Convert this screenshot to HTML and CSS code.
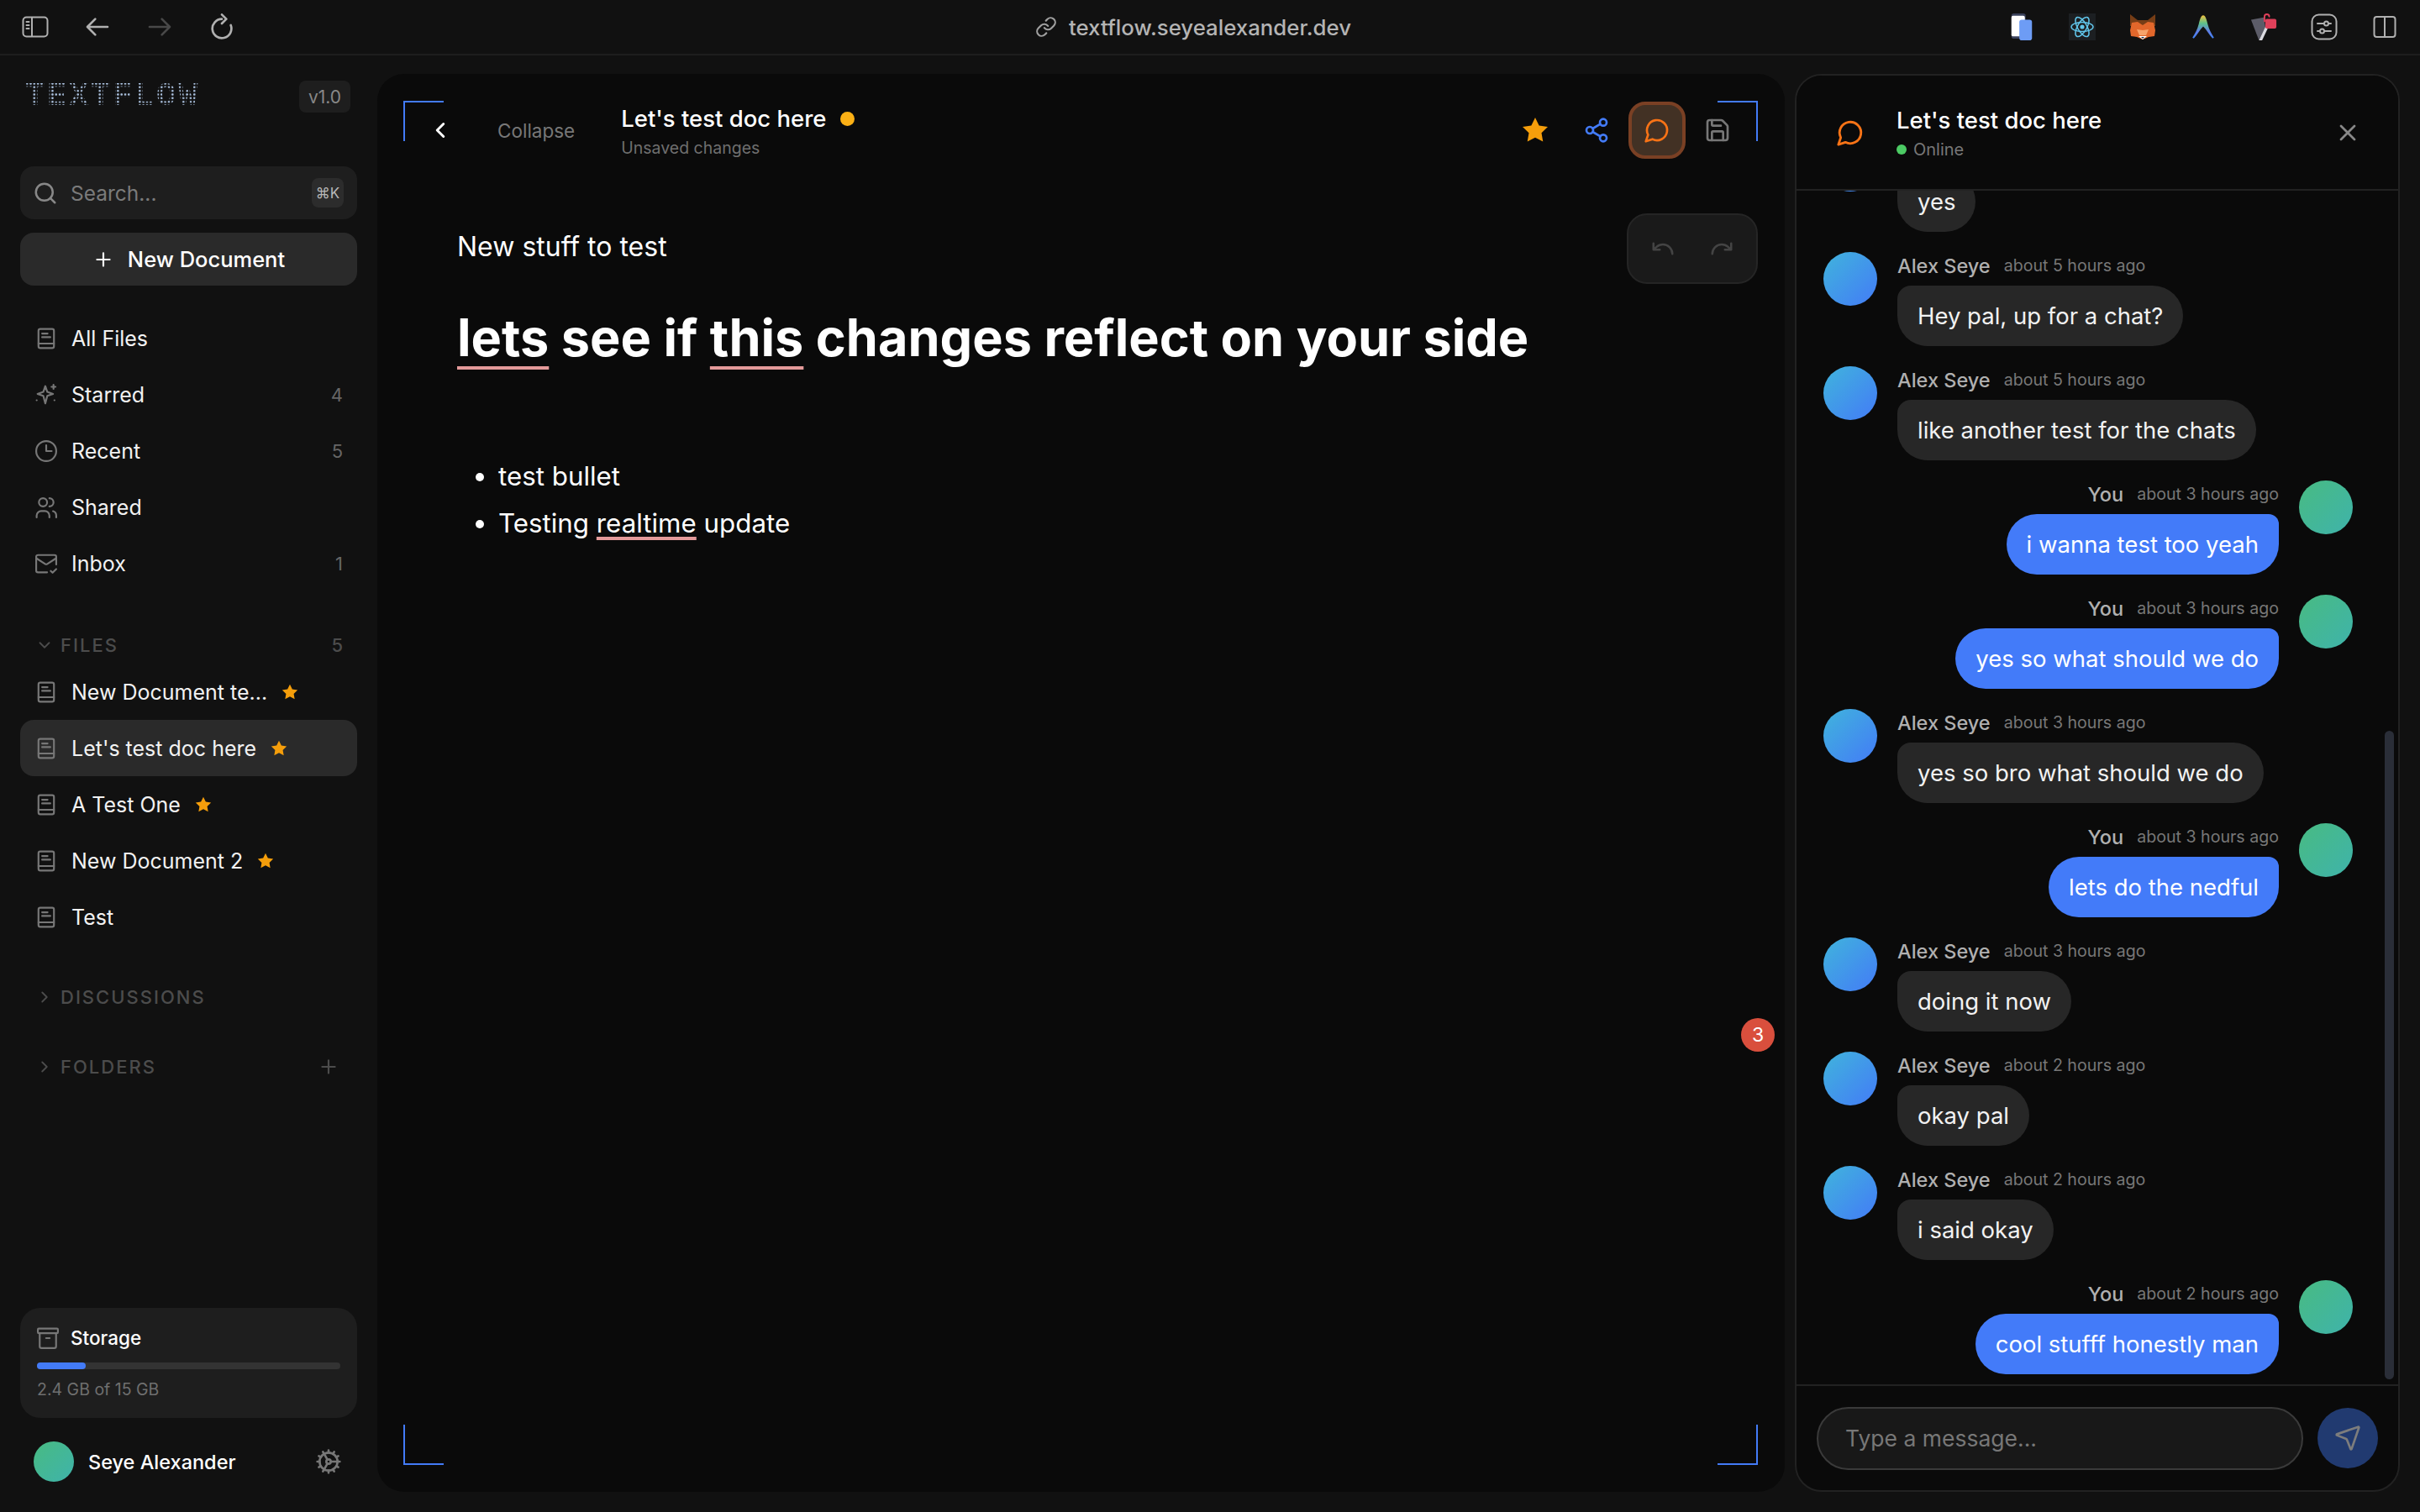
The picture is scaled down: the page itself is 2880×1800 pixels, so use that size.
FILE: index.html
```html
<!DOCTYPE html>
<html>
    <head>
        <meta name="viewport" content="width=device-width, initial-scale=1.0">
        <link rel="stylesheet" href="styles.css">
    </head>
    <body>
        <svg class="defs" width="0" height="0">
            <symbol id="doc" viewBox="0 0 24 24"><rect x="3.500" y="1.500" width="17" height="21" rx="2"/><path d="M3.500 17.500h17M7.500 6.500h6M7.500 10.500h9"/></symbol>
            <symbol id="star" viewBox="0 0 24 24"><path class="solid" d="M12 2l3.090 6.260L22 9.270l-5 4.870 1.180 6.880L12 17.770l-6.180 3.250L7 14.140 2 9.270l6.910-1.010z"/></symbol>
            <symbol id="chat" viewBox="0 0 24 24"><path d="M7.900 20A9 9 0 1 0 4 16.100L2 22Z"/></symbol>
            <symbol id="right" viewBox="0 0 24 24"><path d="M9 18l6-6-6-6"/></symbol>
            <symbol id="down" viewBox="0 0 24 24"><path d="M6 9l6 6 6-6"/></symbol>
        </svg>

        <header class="topbar">
            <div class="tb-left">
                <span class="tb-cell"><svg class="ic-32" viewBox="0 0 32 26"><rect x="1.500" y="1.500" width="29" height="23" rx="4"/><path d="M12 2v22M5.500 7h3M5.500 11h3M5.500 15h3"/></svg></span>
                <span class="tb-cell"><svg class="ic-32" viewBox="0 0 24 24"><path d="M21 12H3M10 5l-7 7 7 7"/></svg></span>
                <span class="tb-cell dim"><svg class="ic-32" viewBox="0 0 24 24"><path d="M3 12h18M14 5l7 7-7 7"/></svg></span>
                <span class="tb-cell"><svg class="ic-32" viewBox="0 0 24 24"><path d="M12 5a8.500 8.500 0 1 0 8 5.500M12 1l4 4-4 4"/></svg></span>
            </div>
            <div class="address">
                <svg class="ic-26" viewBox="0 0 24 24"><path d="M10 13a5 5 0 0 0 7.540.54l3-3a5 5 0 0 0-7.070-7.070l-1.720 1.710"/><path d="M14 11a5 5 0 0 0-7.540-.54l-3 3a5 5 0 0 0 7.070 7.070l1.710-1.710"/></svg>
                <span>textflow.seyealexander.dev</span>
            </div>
            <div class="tb-right">
                <span class="tb-cell">
                    <svg class="ext" viewBox="0 0 28 34"><rect x="1" y="0" width="18" height="32" rx="3" fill="#39405a"/><rect x="1" y="3" width="17" height="26" rx="2" fill="#fff"/><rect x="11" y="8" width="16" height="26" rx="3" fill="#6d9cf5"/></svg>
                </span>
                <span class="tb-cell">
                    <svg class="ext" viewBox="0 0 32 32"><rect width="32" height="32" fill="#1c1f22"/><g class="react"><ellipse cx="16" cy="16" rx="13" ry="5.500"/><ellipse cx="16" cy="16" rx="13" ry="5.500" transform="rotate(60 16 16)"/><ellipse cx="16" cy="16" rx="13" ry="5.500" transform="rotate(120 16 16)"/></g><circle cx="16" cy="16" r="2.600" fill="#61c5ea"/></svg>
                </span>
                <span class="tb-cell">
                    <svg class="ext" viewBox="0 0 32 32"><path fill="#763d16" d="M1 1l9 7h12l9-7 0 14-30 0z"/><path fill="#e2672b" d="M3 11l7-1 6 4 6-4 7 1 2 9-1 7-7 1-7 3-7-3-7-1-1-7z"/><path fill="#f6a36b" d="M9 19l7 1 7-1-3 7h-8z"/><path fill="#fff" d="M11 27h10l-5 4z"/><path fill="#233447" d="M14 28h4l-2 2z"/></svg>
                </span>
                <span class="tb-cell">
                    <svg class="ext" viewBox="0 0 28 30"><defs><linearGradient id="arc" x1="0" y1="0" x2="0" y2="1"><stop offset="0" stop-color="#f3c13c"/><stop offset=".35" stop-color="#5cc08a"/><stop offset=".7" stop-color="#5f7ee8"/><stop offset="1" stop-color="#3f83f5"/></linearGradient></defs><path d="M14 2c2.500 0 3.500 4 5 10 1.500 6 4 10 7 15l-1.500 1c-4-4-6.500-10-10.500-13.500C10 18 7.500 24 3.500 28L2 27c3-5 5.500-9 7-15 1.500-6 2.500-10 5-10z" fill="url(#arc)"/></svg>
                </span>
                <span class="tb-cell">
                    <svg class="ext" viewBox="0 0 34 34"><path fill="#5c5c68" d="M1 8l16-3 2 12-8 17z"/><path fill="#dcdce2" d="M11 34l8-17h4l-8 17z"/><path fill="none" stroke="#e0405a" stroke-width="2" d="M18 10V4a3 3 0 0 1 6 0"/><rect x="19" y="7" width="14" height="12" rx="2" fill="#e0405a"/></svg>
                </span>
                <span class="tb-cell">
                    <svg class="ic-32" viewBox="0 0 32 32"><rect x="1.500" y="1.500" width="29" height="29" rx="8"/><path d="M8 12h8M21 12h3M8 21h3M16 21h8"/><circle cx="18.500" cy="12" r="2.500"/><circle cx="13.500" cy="21" r="2.500"/></svg>
                </span>
                <span class="tb-cell">
                    <svg class="ic-28" viewBox="0 0 28 28"><rect x="1.500" y="2" width="25" height="24" rx="3"/><path d="M14 2v24"/></svg>
                </span>
            </div>
        </header>

        <div class="app">
            <aside class="sidebar">
                <div class="brand">
                    <span class="logo">TEXTFLOW</span>
                    <span class="version">v1.0</span>
                </div>
                <div class="search">
                    <svg class="ic-30" viewBox="0 0 24 24"><circle cx="11" cy="11" r="8"/><path d="M21 21l-4.300-4.300"/></svg>
                    <span class="search-text">Search...</span>
                    <span class="kbd">⌘K</span>
                </div>
                <div class="new-doc">
                    <svg class="ic-26" viewBox="0 0 24 24"><path d="M5 12h14M12 5v14"/></svg>
                    <span>New Document</span>
                </div>

                <nav class="nav">
                    <a class="row"><svg class="ic-26"><use href="#doc"/></svg><span>All Files</span></a>
                    <a class="row"><svg class="ic-26" viewBox="0 0 24 24"><path d="M11 2.500l2.200 6.300 6.300 2.200-6.300 2.200-2.200 8.300-2.200-8.300L2.500 11l6.300-2.200z"/><path d="M20 1v4.500M17.800 3.200h4.400M1.500 18h.1M21 18h.1"/></svg><span>Starred</span><em>4</em></a>
                    <a class="row"><svg class="ic-26" viewBox="0 0 24 24"><circle cx="12" cy="12" r="11"/><path d="M12 5.500V12h6"/></svg><span>Recent</span><em>5</em></a>
                    <a class="row"><svg class="ic-26" viewBox="0 0 24 24"><path d="M15.500 23v-2a5 5 0 0 0-5-5h-4a5 5 0 0 0-5 5v2"/><circle cx="8.500" cy="6.500" r="4.500"/><path d="M23 23v-2a5 5 0 0 0-3.500-4.800M15.500 2a4.500 4.500 0 0 1 0 9"/></svg><span>Shared</span></a>
                    <a class="row"><svg class="ic-26" viewBox="0 0 24 24"><path d="M23 13V4.500a2 2 0 0 0-2-2H3a2 2 0 0 0-2 2v15c0 1.100.9 2 2 2h10"/><path d="M23 6l-9.800 6.300a2.200 2.200 0 0 1-2.400 0L1 6M17 20l2 2 4-4"/></svg><span>Inbox</span><em>1</em></a>
                </nav>

                <div class="sec-head first">
                    <svg class="chev"><use href="#down"/></svg>
                    <span>FILES</span>
                    <em>5</em>
                </div>
                <div class="files">
                    <a class="row"><svg class="ic-26"><use href="#doc"/></svg><span>New Document te...</span><svg class="fav"><use href="#star"/></svg></a>
                    <a class="row active"><svg class="ic-26"><use href="#doc"/></svg><span>Let's test doc here</span><svg class="fav"><use href="#star"/></svg></a>
                    <a class="row"><svg class="ic-26"><use href="#doc"/></svg><span>A Test One</span><svg class="fav"><use href="#star"/></svg></a>
                    <a class="row"><svg class="ic-26"><use href="#doc"/></svg><span>New Document 2</span><svg class="fav"><use href="#star"/></svg></a>
                    <a class="row"><svg class="ic-26"><use href="#doc"/></svg><span>Test</span></a>
                </div>
                <div class="sec-head disc">
                    <svg class="chev"><use href="#right"/></svg>
                    <span>DISCUSSIONS</span>
                </div>
                <div class="sec-head fold">
                    <svg class="chev"><use href="#right"/></svg>
                    <span>FOLDERS</span>
                    <svg class="sec-plus" viewBox="0 0 24 24"><path d="M5 12h14M12 5v14"/></svg>
                </div>

                <div class="storage">
                    <div class="storage-top">
                        <svg class="ic-26" viewBox="0 0 24 24"><rect x="1" y="1.500" width="22" height="5" rx="1"/><path d="M3 6.500V21a2 2 0 0 0 2 2h14a2 2 0 0 0 2-2V6.500M10 12h4"/></svg>
                        <span>Storage</span>
                    </div>
                    <div class="bar"><div class="bar-fill" style="width: 16%"></div></div>
                    <div class="storage-text">2.4 GB of 15 GB</div>
                </div>
                <div class="user">
                    <span class="avatar green small"></span>
                    <span class="user-name">Seye Alexander</span>
                    <svg class="gear" viewBox="0 0 24 24"><path d="M12 20a8 8 0 1 0 0-16 8 8 0 0 0 0 16Z"/><path d="M12 14a2 2 0 1 0 0-4 2 2 0 0 0 0 4Z"/><path d="M12 2v2M12 22v-2M17 20.660l-1-1.730M11 10.270L7 3.340M20.660 17l-1.730-1M3.340 7l1.730 1M14 12h8M2 12h2M20.660 7l-1.730 1M3.340 17l1.730-1M17 3.340l-1 1.730M11 13.730L7 20.660"/></svg>
                </div>
            </aside>

            <main class="editor">
                <i class="corner tl"></i><i class="corner tr"></i><i class="corner bl"></i><i class="corner br"></i>
                <div class="ed-head">
                    <svg class="back" viewBox="0 0 24 24"><path d="M15 18l-6-6 6-6"/></svg>
                    <span class="collapse">Collapse</span>
                    <div class="ed-title">
                        <div class="title-line"><span>Let's test doc here</span><i class="dot"></i></div>
                        <div class="ed-sub">Unsaved changes</div>
                    </div>
                    <div class="ed-tools">
                        <svg class="tool-star"><use href="#star"/></svg>
                        <svg class="tool share" viewBox="0 0 24 24"><circle cx="18" cy="5" r="3"/><circle cx="6" cy="12" r="3"/><circle cx="18" cy="19" r="3"/><path d="M8.590 13.510l6.830 3.980M15.410 6.510l-6.820 3.980"/></svg>
                        <span class="chat-btn"><svg class="tool orange"><use href="#chat"/></svg></span>
                        <svg class="tool grey" viewBox="0 0 24 24"><path d="M15.200 3a2 2 0 0 1 1.400.6l3.800 3.800a2 2 0 0 1 .6 1.400V19a2 2 0 0 1-2 2H5a2 2 0 0 1-2-2V5a2 2 0 0 1 2-2z"/><path d="M17 21v-7a1 1 0 0 0-1-1H8a1 1 0 0 0-1 1v7M7 3v4a1 1 0 0 0 1 1h7"/></svg>
                    </div>
                </div>

                <div class="undo">
                    <svg class="tool" viewBox="0 0 24 24"><path d="M3 7v6h6M21 17a9 9 0 0 0-9-9 9 9 0 0 0-6 2.300L3 13"/></svg>
                    <svg class="tool" viewBox="0 0 24 24"><path d="M21 7v6h-6M3 17a9 9 0 0 1 9-9 9 9 0 0 1 6 2.300l3 2.700"/></svg>
                </div>

                <article class="doc">
                    <p class="lead">New stuff to test</p>
                    <h1><u>lets</u> see if <u>this</u> changes reflect on your side</h1>
                    <ul>
                        <li>test bullet</li>
                        <li>Testing <u>realtime</u> update</li>
                    </ul>
                </article>

                <span class="badge">3</span>
            </main>

            <section class="chat">
                <div class="chat-head">
                    <svg class="tool orange"><use href="#chat"/></svg>
                    <div class="chat-title">
                        <div class="chat-name">Let's test doc here</div>
                        <div class="online"><i></i>Online</div>
                    </div>
                    <svg class="close" viewBox="0 0 24 24"><path d="M18 6L6 18M6 6l12 12"/></svg>
                </div>
                <div class="messages">
                    <div class="msg"><span class="avatar blue"></span><div class="msg-body"><div class="meta"></div><div class="bubble">yes</div></div></div>
                    <div class="msg"><span class="avatar blue"></span><div class="msg-body"><div class="meta"><b>Alex Seye</b><time>about 5 hours ago</time></div><div class="bubble">Hey pal, up for a chat?</div></div></div>
                    <div class="msg"><span class="avatar blue"></span><div class="msg-body"><div class="meta"><b>Alex Seye</b><time>about 5 hours ago</time></div><div class="bubble">like another test for the chats</div></div></div>
                    <div class="msg me"><span class="avatar green"></span><div class="msg-body"><div class="meta"><b>You</b><time>about 3 hours ago</time></div><div class="bubble">i wanna test too yeah</div></div></div>
                    <div class="msg me"><span class="avatar green"></span><div class="msg-body"><div class="meta"><b>You</b><time>about 3 hours ago</time></div><div class="bubble">yes so what should we do</div></div></div>
                    <div class="msg"><span class="avatar blue"></span><div class="msg-body"><div class="meta"><b>Alex Seye</b><time>about 3 hours ago</time></div><div class="bubble">yes so bro what should we do</div></div></div>
                    <div class="msg me"><span class="avatar green"></span><div class="msg-body"><div class="meta"><b>You</b><time>about 3 hours ago</time></div><div class="bubble">lets do the nedful</div></div></div>
                    <div class="msg"><span class="avatar blue"></span><div class="msg-body"><div class="meta"><b>Alex Seye</b><time>about 3 hours ago</time></div><div class="bubble">doing it now</div></div></div>
                    <div class="msg"><span class="avatar blue"></span><div class="msg-body"><div class="meta"><b>Alex Seye</b><time>about 2 hours ago</time></div><div class="bubble">okay pal</div></div></div>
                    <div class="msg"><span class="avatar blue"></span><div class="msg-body"><div class="meta"><b>Alex Seye</b><time>about 2 hours ago</time></div><div class="bubble">i said okay</div></div></div>
                    <div class="msg me"><span class="avatar green"></span><div class="msg-body"><div class="meta"><b>You</b><time>about 2 hours ago</time></div><div class="bubble">cool stufff honestly man</div></div></div>
                </div>
                <i class="scroll-thumb"></i>
                <div class="composer">
                    <div class="input">Type a message...</div>
                    <span class="send"><svg class="tool" viewBox="0 0 24 24"><path d="M14.536 21.686a.5.5 0 0 0 .937-.024l6.500-19a.496.496 0 0 0-.635-.635l-19 6.500a.5.5 0 0 0-.024.937l7.930 3.180a2 2 0 0 1 1.112 1.110z"/></svg></span>
                </div>
            </section>
        </div>
    </body>
</html>
```

FILE: styles.css
```css
* {
    box-sizing: border-box;
}

html, body {
    margin: 0;
    height: 100%;
}

body {
    display: flex;
    flex-direction: column;
    width: 2880px;
    height: 1800px;
    overflow: hidden;
    background: #111;
    color: #fff;
    font-family: Inter, "Liberation Sans", sans-serif;
    font-size: 25px;
}

svg {
    fill: none;
    stroke: currentColor;
    stroke-width: 2;
    stroke-linecap: round;
    stroke-linejoin: round;
    flex: none;
}

.solid {
    fill: currentColor;
}

.defs {
    position: absolute;
}

.ic-26 { width: 26px; height: 26px; }
.ic-28 { width: 28px; height: 28px; }
.ic-30 { width: 30px; height: 30px; }
.ic-32 { width: 32px; height: 32px; }

/* browser bar */
.topbar {
    display: grid;
    grid-template-columns: 1fr auto 1fr;
    align-items: center;
    height: 66px;
    flex: none;
    border-bottom: 2px solid #1e1e1e;
    color: #b0b0b0;
}

.tb-left, .tb-right {
    display: flex;
    align-items: center;
}

.tb-left {
    padding-left: 5px;
}

.tb-left .tb-cell {
    width: 74px;
}

.tb-right {
    justify-content: flex-end;
    padding-right: 6px;
}

.tb-cell {
    display: flex;
    align-items: center;
    justify-content: center;
    width: 72px;
}

.dim {
    color: #484848;
}

.ext {
    width: 32px;
    height: 32px;
    stroke: none;
}

.react {
    fill: none;
    stroke: #61c5ea;
    stroke-width: 1.500;
}

.address {
    display: flex;
    align-items: center;
    gap: 14px;
    margin-right: 40px;
    font-size: 25.800px;
    font-weight: 500;
    color: #b4b4b4;
}

.address svg {
    color: #a0a0a0;
}

/* page */
.app {
    display: flex;
    flex: 1;
    min-height: 0;
    padding: 22px 24px 24px 0;
}

.sidebar {
    display: flex;
    flex-direction: column;
    width: 449px;
    flex: none;
    padding: 0 24px 0 24px;
    margin-bottom: 12px;
}

.brand {
    display: flex;
    align-items: center;
    justify-content: space-between;
    height: 38px;
    margin-top: 8px;
    padding: 0 8px 0 6px;
}

.logo {
    font-family: "Liberation Mono", monospace;
    font-size: 39px;
    font-weight: 700;
    letter-spacing: 2.600px;
    color: transparent;
    background: radial-gradient(circle, #a9bfdc 1.100px, transparent 1.400px) 0 0 / 4.330px 4.330px;
    -webkit-background-clip: text;
    background-clip: text;
}

.version {
    display: flex;
    align-items: center;
    justify-content: center;
    width: 61px;
    height: 38px;
    border-radius: 8px;
    background: #1e1e1e;
    color: #888;
    font-size: 21px;
}

.search {
    display: flex;
    align-items: center;
    height: 63px;
    margin-top: 64px;
    padding: 0 16px 0 15px;
    border-radius: 16px;
    background: #1e1e1e;
    color: #888;
}

.search-text {
    flex: 1;
    margin-left: 15px;
    color: #7a7a7a;
    font-size: 24.500px;
}

.kbd {
    display: flex;
    align-items: center;
    justify-content: center;
    width: 38px;
    height: 35px;
    border-radius: 8px;
    background: #2c2c2c;
    color: #b8b8b8;
    font-size: 17px;
}

.new-doc {
    display: flex;
    align-items: center;
    justify-content: center;
    gap: 16px;
    height: 63px;
    margin-top: 16px;
    border-radius: 16px;
    background: #2a2a2a;
    font-size: 25.500px;
    font-weight: 500;
}

.nav {
    margin-top: 29px;
}

.row {
    display: flex;
    align-items: center;
    height: 67px;
    padding: 0 17px 0 18px;
    border-radius: 16px;
    color: #f2f2f2;
    font-size: 25px;
}

.row svg:first-child {
    color: #777;
    margin-right: 17px;
}

.row em {
    margin-left: auto;
    font-style: normal;
    font-size: 22px;
    color: #666;
}

.row.active {
    background: #2a2a2a;
}

.files {
    margin-top: 2px;
}

.fav {
    width: 22px;
    height: 22px;
    margin-left: 16px;
    color: #f59e0b;
    stroke: none;
}

.sec-head {
    display: flex;
    align-items: center;
    height: 40px;
    padding: 0 17px 0 18px;
    color: #4c4c4c;
    font-size: 22px;
    font-weight: 500;
    letter-spacing: 2px;
}

.sec-head.first {
    margin-top: 44px;
}

.sec-head.disc {
    margin-top: 42px;
}

.sec-head.fold {
    margin-top: 43px;
}

.sec-head em {
    margin-left: auto;
    font-style: normal;
    letter-spacing: 0;
}

.chev {
    width: 22px;
    height: 22px;
    margin-right: 8px;
}

.sec-plus {
    width: 26px;
    height: 26px;
    margin-left: auto;
    margin-right: 4px;
}

.storage {
    margin-top: auto;
    padding: 22px 20px 0 20px;
    height: 131px;
    border-radius: 24px;
    background: #1e1e1e;
}

.storage-top {
    display: flex;
    align-items: center;
    gap: 14px;
    font-size: 22.500px;
    font-weight: 500;
}

.storage-top svg {
    color: #777;
}

.bar {
    height: 8px;
    margin-top: 16px;
    border-radius: 4px;
    background: #333;
}

.bar-fill {
    height: 100%;
    border-radius: 4px;
    background: #437bf7;
}

.storage-text {
    margin-top: 12px;
    font-size: 19.500px;
    color: #6f6f6f;
}

.user {
    display: flex;
    align-items: center;
    height: 48px;
    margin-top: 28px;
    padding: 0 18px 0 16px;
    font-size: 23.500px;
    font-weight: 500;
}

.user-name {
    flex: 1;
    margin-left: 17px;
}

.gear {
    width: 32px;
    height: 32px;
    color: #777;
}

.avatar {
    display: block;
    width: 64px;
    height: 64px;
    flex: none;
    border-radius: 50%;
}

.avatar.small {
    width: 48px;
    height: 48px;
}

.green {
    background: linear-gradient(135deg, #48bb82, #3fb3ab);
}

.blue {
    background: linear-gradient(135deg, #40b4dc, #437bf7);
}

/* editor */
.editor {
    position: relative;
    width: 1675px;
    flex: none;
    border-radius: 32px;
    background: #0a0a0a;
}

.corner {
    position: absolute;
    width: 48px;
    height: 48px;
    border: 0 solid #437bf7;
}

.corner.tl { left: 31px; top: 32px; border-width: 2px 0 0 2px; }
.corner.tr { right: 32px; top: 32px; border-width: 2px 2px 0 0; }
.corner.bl { left: 31px; bottom: 32px; border-width: 0 0 2px 2px; }
.corner.br { right: 32px; bottom: 32px; border-width: 0 2px 2px 0; }

.ed-head {
    display: flex;
    align-items: center;
    height: 134px;
    padding: 0 64px 0 60px;
}

.back {
    width: 30px;
    height: 30px;
    stroke-width: 2.400;
}

.collapse {
    margin-left: 53px;
    color: #777;
    font-size: 22.500px;
}

.ed-title {
    margin-left: 55px;
    margin-top: 2px;
}

.title-line {
    display: flex;
    align-items: center;
    gap: 16px;
    font-size: 27.500px;
    font-weight: 500;
}

.dot {
    width: 17px;
    height: 17px;
    border-radius: 50%;
    background: #fbb015;
}

.ed-sub {
    margin-top: 6px;
    color: #6f6f6f;
    font-size: 19.500px;
}

.ed-tools {
    display: flex;
    align-items: center;
    margin-left: auto;
}

.tool-star {
    width: 36px;
    height: 36px;
    margin-right: 39px;
    color: #f59e0b;
    stroke: none;
}

.tool {
    width: 32px;
    height: 32px;
}

.share {
    color: #437bf7;
    margin-right: 22px;
}

.orange {
    color: #f97316;
}

.grey {
    color: #777;
    margin-left: 22px;
}

.chat-btn {
    display: flex;
    align-items: center;
    justify-content: center;
    width: 68px;
    height: 68px;
    border: 4px solid #7a4024;
    border-radius: 20px;
    background: #423124;
}

.undo {
    position: absolute;
    top: 166px;
    right: 32px;
    display: flex;
    align-items: center;
    justify-content: space-between;
    width: 156px;
    height: 84px;
    padding: 0 26px;
    border: 2px solid #252525;
    border-radius: 24px;
    background: #1a1a1a;
    color: #444;
}

.undo .tool {
    width: 30px;
    height: 30px;
}

.doc {
    padding: 0 95px;
    margin-top: 50px;
}

.lead {
    margin: 0;
    font-size: 32px;
    line-height: 44px;
}

.doc h1 {
    margin: 48px 0 0 0;
    font-size: 61.200px;
    font-weight: 700;
    line-height: 76px;
}

.doc ul {
    margin: 99px 0 0 0;
    padding-left: 49px;
    font-size: 31.300px;
    line-height: 56px;
}

.doc u {
    text-decoration-color: #e49a9a;
    text-decoration-thickness: 4px;
    text-underline-offset: 5px;
}

.doc h1 u {
    text-underline-offset: 12px;
}

.badge {
    position: absolute;
    left: 1623px;
    top: 1124px;
    display: flex;
    align-items: center;
    justify-content: center;
    width: 40px;
    height: 40px;
    border-radius: 50%;
    background: #d94f3d;
    font-size: 23px;
}

/* chat panel */
.chat {
    position: relative;
    display: flex;
    flex-direction: column;
    flex: 1;
    margin-left: 12px;
    border: 2px solid #222;
    border-radius: 32px;
    background: #0a0a0a;
    overflow: hidden;
}

.chat-head {
    position: relative;
    z-index: 1;
    display: flex;
    align-items: center;
    height: 137px;
    flex: none;
    padding: 0 44px 0 47px;
    background: #0a0a0a;
    border-bottom: 2px solid #222;
}

.chat-head .tool {
    width: 34px;
    height: 34px;
}

.chat-title {
    margin-left: 38px;
}

.chat-name {
    font-size: 27.500px;
    font-weight: 500;
}

.online {
    display: flex;
    align-items: center;
    gap: 8px;
    margin-top: 6px;
    color: #777;
    font-size: 20px;
}

.online i {
    width: 12px;
    height: 12px;
    border-radius: 50%;
    background: #4ccb64;
}

.close {
    width: 32px;
    height: 32px;
    margin-left: auto;
    color: #888;
}

.messages {
    display: flex;
    flex-direction: column;
    justify-content: flex-end;
    flex: 1;
    min-height: 0;
    gap: 24px;
    padding: 0 54px 12px 32px;
    overflow: hidden;
}

.msg {
    display: flex;
    flex: none;
    gap: 24px;
}

.msg.me {
    flex-direction: row-reverse;
}

.msg-body {
    display: flex;
    flex-direction: column;
    align-items: flex-start;
}

.msg.me .msg-body {
    align-items: flex-end;
}

.meta {
    display: flex;
    align-items: center;
    gap: 16px;
    height: 40px;
    padding-bottom: 8px;
    color: #777;
    font-size: 19.600px;
}

.meta b {
    font-weight: 500;
    font-size: 23.500px;
    color: #b0b0b0;
}

.bubble {
    height: 72px;
    padding: 0 24px;
    border-radius: 16px 36px 36px 36px;
    background: #272727;
    color: #f2f2f2;
    font-size: 27.500px;
    line-height: 72px;
}

.me .bubble {
    border-radius: 36px 12px 36px 36px;
    background: #437bf9;
    color: #fff;
}

.scroll-thumb {
    position: absolute;
    right: 5px;
    top: 780px;
    width: 11px;
    height: 772px;
    border-radius: 6px;
    background: #2a2e38;
}

.composer {
    display: flex;
    align-items: center;
    gap: 17px;
    height: 126px;
    flex: none;
    padding: 0 24px;
    border-top: 2px solid #222;
}

.input {
    display: flex;
    align-items: center;
    flex: 1;
    height: 75px;
    padding: 0 32px;
    border: 2px solid #3a3a3a;
    border-radius: 38px;
    background: #181818;
    color: #777;
    font-size: 26.500px;
}

.send {
    display: flex;
    align-items: center;
    justify-content: center;
    width: 72px;
    height: 72px;
    flex: none;
    border-radius: 50%;
    background: #213a70;
    color: #7d7d7d;
}
```
